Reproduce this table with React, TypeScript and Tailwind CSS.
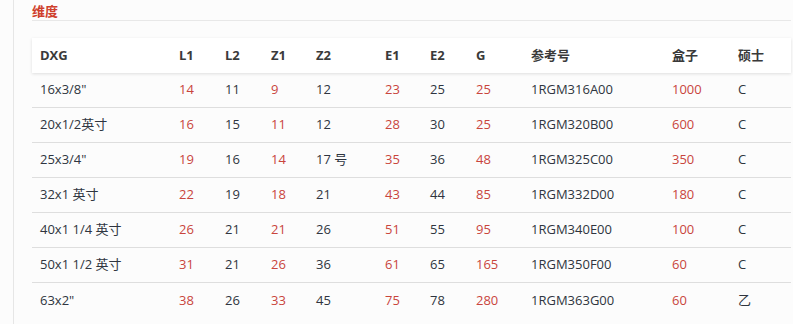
import React from 'react';

const cols = ['DXG', 'L1', 'L2', 'Z1', 'Z2', 'E1', 'E2', 'G', '参考号', '盒子', '硕士'];
const redCols = [1, 3, 5, 7, 9];

const rows = [
  ['16x3/8"', '14', '11', '9', '12', '23', '25', '25', '1RGM316A00', '1000', 'C'],
  ['20x1/2英寸', '16', '15', '11', '12', '28', '30', '25', '1RGM320B00', '600', 'C'],
  ['25x3/4"', '19', '16', '14', '17 号', '35', '36', '48', '1RGM325C00', '350', 'C'],
  ['32x1 英寸', '22', '19', '18', '21', '43', '44', '85', '1RGM332D00', '180', 'C'],
  ['40x1 1/4 英寸', '26', '21', '21', '26', '51', '55', '95', '1RGM340E00', '100', 'C'],
  ['50x1 1/2 英寸', '31', '21', '26', '36', '61', '65', '165', '1RGM350F00', '60', 'C'],
  ['63x2"', '38', '26', '33', '45', '75', '78', '280', '1RGM363G00', '60', '乙'],
];

const grid =
  'grid grid-cols-[139px_46px_46px_45px_69px_45px_46px_55px_141px_66px_61px]';

function App() {
  return (
    <div
      className="h-[324px] w-[793px] overflow-hidden bg-[#fcfcfc] text-[13px] text-[#333]"
      style={{ fontFamily: '"Open Sans", "Noto Sans CJK SC", sans-serif' }}
    >
      <div className="ml-[13px] flex h-full border-l border-[#e6e6e6]">
        <div className="ml-[18px] w-[759px]">
          <div className="h-[21px] border-b border-[#e8e8e8] pt-[1px] font-bold leading-[20px] text-[#cf3f2c]">
            维度
          </div>
          <div className="mt-[17px]">
            <div
              className={`${grid} h-[35px] items-center bg-white font-bold text-[#3a3a3a] shadow-[0_1px_3px_rgba(0,0,0,0.12)]`}
            >
              {cols.map((c) => (
                <div key={c} className="px-2">
                  {c}
                </div>
              ))}
            </div>
            {rows.map((r, i) => (
              <div
                key={i}
                className={`${grid} h-[35px] items-center ${
                  i < rows.length - 1 ? 'border-b border-[#dedede]' : ''
                }`}
              >
                {r.map((v, j) => (
                  <div
                    key={j}
                    className={`px-2 ${redCols.includes(j) ? 'text-[#c9453c]' : 'text-[#2f3540]'}`}
                  >
                    {v}
                  </div>
                ))}
              </div>
            ))}
          </div>
        </div>
      </div>
    </div>
  );
}

export default App;
